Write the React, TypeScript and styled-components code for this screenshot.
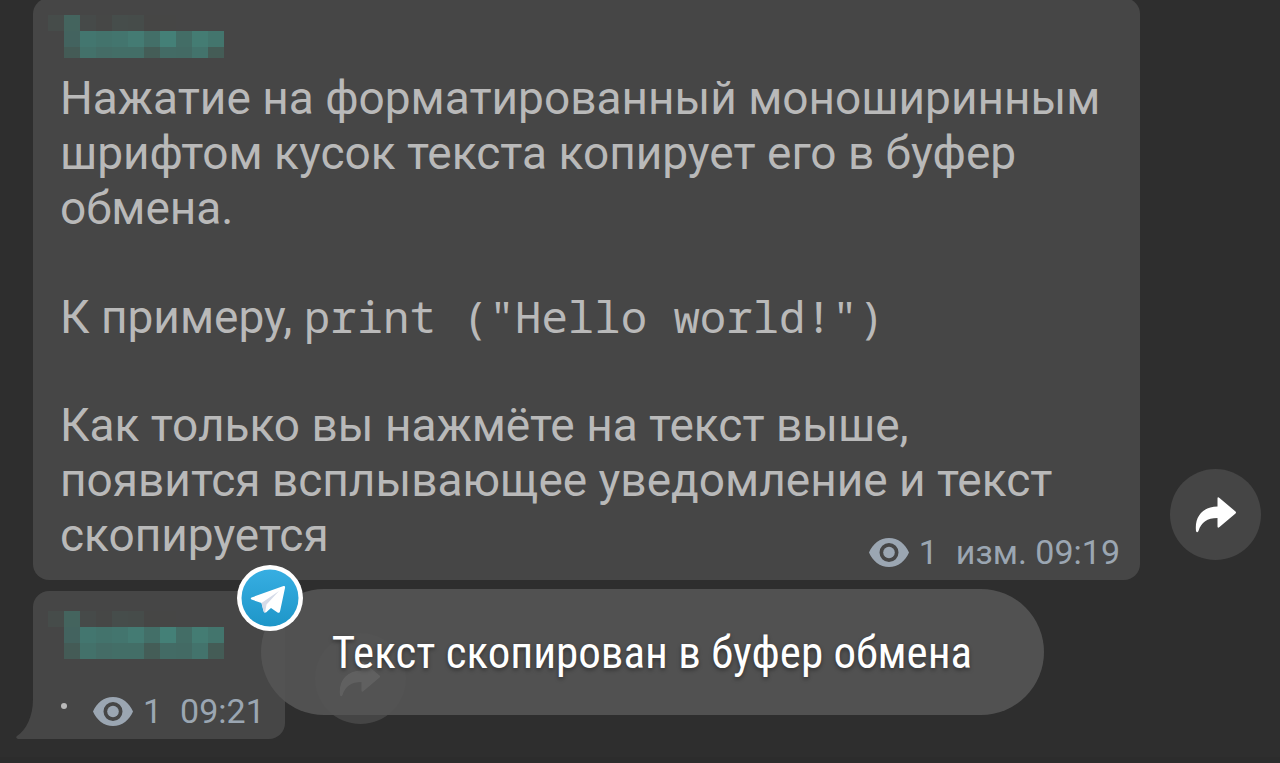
import styled, { createGlobalStyle } from 'styled-components';

const Global = createGlobalStyle`
  * { box-sizing: border-box; }
  body { margin: 0; background: #2e2e2e; font-family: Roboto, sans-serif; }
  button { border: 0; padding: 0; font: inherit; color: inherit; background: none; cursor: pointer; }
`;

const Chat = styled.main`
  position: relative;
  min-height: 100vh;
  overflow: hidden;
  display: flex;
  flex-direction: column;
  gap: 11px;
  padding: 0 19px 16px 33px;
  border-bottom: 6px solid #2c2c2c;
  color: #b9b9b9;
`;

const Row = styled.div`
  display: flex;
  align-items: flex-end;
  gap: 30px;
`;

const Bubble = styled.article`
  position: relative;
  border-radius: 16px;
  background: #464646;
`;

const LongBubble = styled(Bubble)`
  flex: 1 1 0;
  margin-top: -2px;
  padding: 17px 20px 8px 27px;
`;

const ShortBubble = styled(Bubble)`
  flex: none;
  border-bottom-left-radius: 0;
  padding: 20px 20px 8px 27px;
`;

const Tail = styled.svg`
  position: absolute;
  left: -17px;
  bottom: 0;
  fill: #464646;
`;

const Author = styled.svg`
  display: block;
  margin-left: -12px;
`;

const Body = styled.div`
  margin-top: 13px;
  font-size: 46px;
  line-height: 55px;
`;

const Paragraph = styled.p`
  margin: 0;
  & + & { margin-top: 53px; }
`;

const CopyCode = styled.button`
  font-family: "Noto Sans Mono", "Noto Mono", "Droid Sans Mono", "DejaVu Sans Mono", monospace;
  font-size: 44px;
`;

const Meta = styled.footer`
  display: flex;
  align-items: center;
  justify-content: flex-end;
  gap: 10px;
  font-size: 34px;
  line-height: 40px;
  color: #9ba6b2;
`;

const LongMeta = styled(Meta)`
  margin-top: -31px;
`;

const ShortMeta = styled(Meta)`
  margin-top: 32px;
`;

const Dot = styled.span`
  width: 6px;
  height: 6px;
  border-radius: 50%;
  margin: 0 16px 10px 1px;
  background: #b9b9b9;
`;

const Stamp = styled.time`
  margin-left: 8px;
`;

const ShareButton = styled.button<{ $lift: number }>`
  flex: none;
  width: 91px;
  height: 91px;
  margin-bottom: ${(p) => p.$lift}px;
  border-radius: 50%;
  background: #454545;
  display: grid;
  place-items: center;
`;

const ToastLayer = styled.div`
  position: absolute;
  left: 0;
  right: 0;
  bottom: 42px;
  display: flex;
  justify-content: center;
  padding-left: 25px;
`;

const Toast = styled.div`
  position: relative;
  padding: 35px 72px 33px 71px;
  border-radius: 63px;
  background: rgba(84, 84, 84, 0.93);
  color: #fff;
  font-family: "Roboto Condensed", Roboto, sans-serif;
  font-size: 45px;
  line-height: 58px;
  white-space: nowrap;
  text-shadow: 0 2px 4px rgba(0, 0, 0, 0.4);
`;

const AppBadge = styled.svg`
  position: absolute;
  left: -25px;
  top: -25px;
`;

const nameMosaic = [
  ['#464c4a', '#44645e', '#464a49', '#464746', '#464d4b', '#464c4a', '#464645', '#464645', '', '', ''],
  ['', '#43635f', '#43766f', '#43736c', '#43756e', '#447b73', '#436f68', '#448077', '#436d66', '#447c73', '#43756d'],
  ['', '#445b56', '#43716a', '#446c66', '#436e67', '#436e67', '#445d57', '#436b65', '#436a64', '#43736c', '#445c56'],
];

function AuthorName({ height }: { height: number }) {
  return (
    <Author width="176" height={height} role="img" aria-label="Автор" shapeRendering="crispEdges">
      {nameMosaic.map((row, y) =>
        row.map((fill, x) => fill && <rect key={`${x}-${y}`} x={x * 16} y={y * 16} width="16" height="16" fill={fill} />),
      )}
    </Author>
  );
}

function Eye() {
  return (
    <svg width="40" height="29" viewBox="0 0 40 29" aria-hidden="true">
      <path fill="#9ba6b2" fillRule="evenodd" d="M20 0C11 0 3.500 6 0 14.500C3.500 23 11 29 20 29S36.500 23 40 14.500C36.500 6 29 0 20 0ZM20 5a9.500 9.500 0 1 1 0 19a9.500 9.500 0 0 1 0-19Z" />
      <circle cx="20" cy="14.500" r="5.800" fill="#9ba6b2" />
    </svg>
  );
}

function Share({ lift }: { lift: number }) {
  return (
    <ShareButton $lift={lift} aria-label="Переслать">
      <svg width="42" height="36" viewBox="0 0 42 36" aria-hidden="true">
        <path fill="#fff" d="M22.500 1.500Q22.500 -.5 24.500 1L40.500 14.500Q41.500 15.500 40.500 16.500L24.500 30Q22.500 31.500 22.500 29.500V21C12 21 6.500 25 3.500 34Q2 36.500 1 34C-.5 20 7 10 22.500 9.500Z" />
      </svg>
    </ShareButton>
  );
}

export default function App() {
  return (
    <>
      <Global />
      <Chat>
        <Row>
          <LongBubble>
            <AuthorName height={43} />
            <Body>
              <Paragraph>
                Нажатие на форматированный моноширинным шрифтом кусок текста копирует его в буфер обмена.
              </Paragraph>
              <Paragraph>
                К примеру, <CopyCode>print ("Hello world!")</CopyCode>
              </Paragraph>
              <Paragraph>
                Как только вы нажмёте на текст выше, появится всплывающее уведомление и текст скопируется
              </Paragraph>
            </Body>
            <LongMeta>
              <Eye />
              <span>1</span>
              <Stamp>изм. 09:19</Stamp>
            </LongMeta>
          </LongBubble>
          <Share lift={20} />
        </Row>
        <Row>
          <ShortBubble>
            <AuthorName height={48} />
            <ShortMeta>
              <Dot />
              <Eye />
              <span>1</span>
              <Stamp>09:21</Stamp>
            </ShortMeta>
            <Tail width="18" height="40" viewBox="0 0 18 40" aria-hidden="true">
              <path d="M18 0H17C17 18 10 31 1 37Q-1 39 2 40H18Z" />
            </Tail>
          </ShortBubble>
          <Share lift={15} />
        </Row>
        <ToastLayer>
          <Toast role="status">
            <AppBadge width="68" height="68" viewBox="0 0 68 68" aria-hidden="true">
              <defs>
                <linearGradient id="sky" x1="0" y1="0" x2="0" y2="1">
                  <stop offset="0" stopColor="#37aee2" />
                  <stop offset="1" stopColor="#1e96c8" />
                </linearGradient>
              </defs>
              <circle cx="34" cy="34" r="33" fill="#fff" />
              <circle cx="34" cy="34" r="28.500" fill="url(#sky)" />
              <path fill="#fff" d="M15.500 33.500L47.500 22Q49.500 21.500 49 24L44 47.500Q43.500 49.500 41.500 48.500L35 44L30 48.500Q28 49 27.500 47L25.500 39L15.500 35.500Q14 34.500 15.500 33.500Z" />
              <path fill="#d5dbe8" d="M25.500 39L43 27L30.500 40.500L29 48.800Q28 49 27.500 47Z" />
            </AppBadge>
            Текст скопирован в буфер обмена
          </Toast>
        </ToastLayer>
      </Chat>
    </>
  );
}
